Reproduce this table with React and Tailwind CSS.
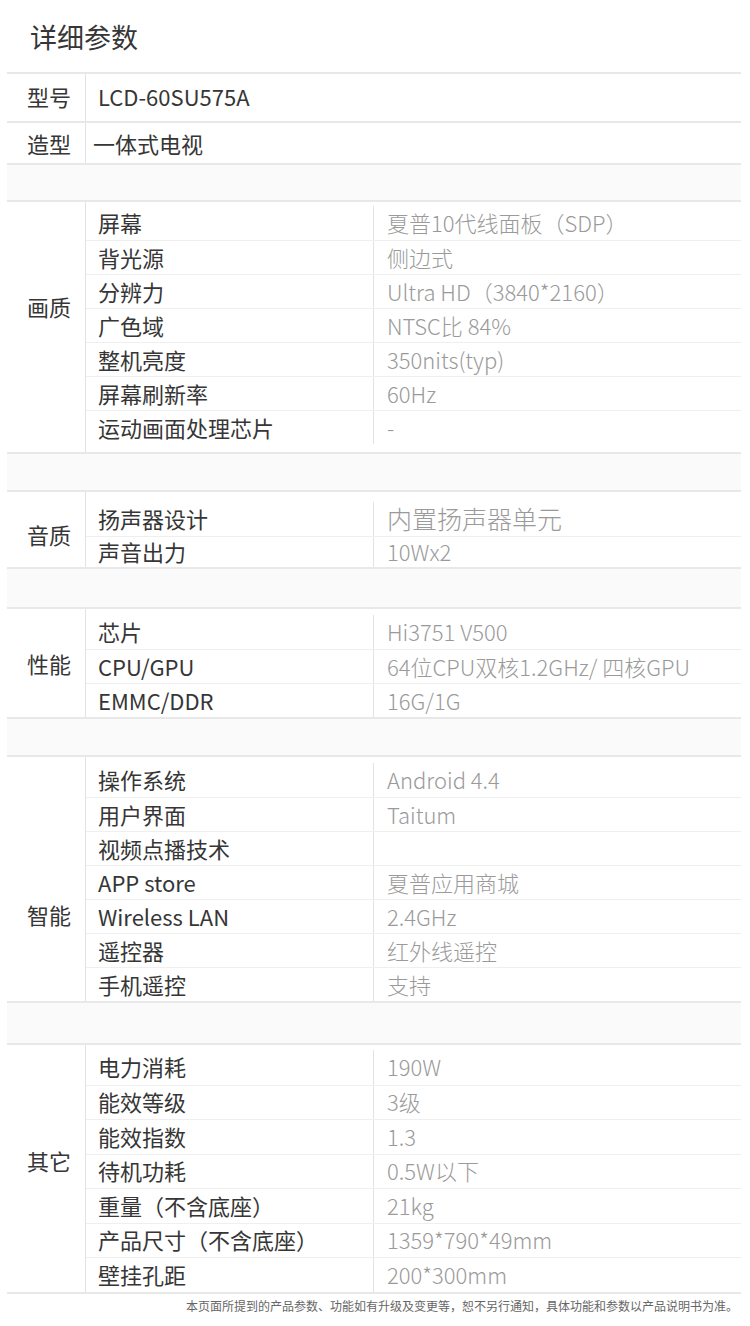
import React from "react";

const groups = [
  {
    label: "画质",
    pad: "pt-[4px] pb-[8px]",
    labelPad: "pb-[42px]",
    rowH: "h-[34px]",
    lastH: "h-[34px]",
    spacer: "h-[38px]",
    rows: [
      ["屏幕", "夏普10代线面板（SDP）"],
      ["背光源", "侧边式"],
      ["分辨力", "Ultra HD（3840*2160）"],
      ["广色域", "NTSC比 84%"],
      ["整机亮度", "350nits(typ)"],
      ["屏幕刷新率", "60Hz"],
      ["运动画面处理芯片", "-"],
    ],
  },
  {
    label: "音质",
    pad: "pt-[10px] pb-[0px]",
    labelPad: "pt-[10px]",
    rowH: "h-[34px]",
    lastH: "h-[31px]",
    spacer: "h-[40px]",
    rows: [
      ["扬声器设计", "内置扬声器单元", "text-[25px]"],
      ["声音出力", "10Wx2"],
    ],
  },
  {
    label: "性能",
    pad: "pt-[6px] pb-[0px]",
    labelPad: "pt-[0px]",
    rowH: "h-[34px]",
    lastH: "h-[34px]",
    spacer: "h-[38px]",
    rows: [
      ["芯片", "Hi3751 V500"],
      ["CPU/GPU", "64位CPU双核1.2GHz/ 四核GPU"],
      ["EMMC/DDR", "16G/1G"],
    ],
  },
  {
    label: "智能",
    pad: "pt-[6px] pb-[0px]",
    labelPad: "pt-[70px]",
    rowH: "h-[34px]",
    lastH: "h-[34px]",
    spacer: "h-[42px]",
    rows: [
      ["操作系统", "Android 4.4"],
      ["用户界面", "Taitum"],
      ["视频点播技术", ""],
      ["APP store", "夏普应用商城"],
      ["Wireless LAN", "2.4GHz"],
      ["遥控器", "红外线遥控"],
      ["手机遥控", "支持"],
    ],
  },
  {
    label: "其它",
    pad: "pt-[5px] pb-[0px]",
    labelPad: "pb-[16px]",
    rowH: "h-[34.5px]",
    lastH: "h-[34.5px]",
    spacer: null,
    rows: [
      ["电力消耗", "190W"],
      ["能效等级", "3级"],
      ["能效指数", "1.3"],
      ["待机功耗", "0.5W以下"],
      ["重量（不含底座）", "21kg"],
      ["产品尺寸（不含底座）", "1359*790*49mm"],
      ["壁挂孔距", "200*300mm"],
    ],
  },
];

const font = { fontFamily: '"Noto Sans CJK SC", "Noto Sans", sans-serif' };

function Group({ g }) {
  return (
    <>
      <div className="flex border-b-2 border-[#e8e8e8]">
        <div
          className={`w-[79px] shrink-0 flex items-center justify-center pl-[6px] border-r border-[#e3e3e3] text-[22px] text-[#363636] ${g.labelPad}`}
        >
          {g.label}
        </div>
        <div className={`flex-1 flex flex-col ${g.pad}`}>
          {g.rows.map((r, i) => (
            <div
              key={i}
              className={`flex ${i === g.rows.length - 1 ? g.lastH : g.rowH} ${
                i > 0 ? "border-t border-[#efefef]" : ""
              }`}
            >
              <div className="w-[287px] shrink-0 flex items-center pl-[12px] pb-[2px] text-[22px] text-[#363636] leading-none whitespace-nowrap">
                {r[0]}
              </div>
              <div
                className={`flex-1 flex items-center pl-[13px] pb-[2px] border-l border-[#e3e3e3] font-light text-[#9a9a9a] leading-none whitespace-nowrap ${
                  r[2] ? r[2] : "text-[22px]"
                }`}
              >
                {r[1]}
              </div>
            </div>
          ))}
        </div>
      </div>
      {g.spacer && (
        <div className={`${g.spacer} bg-[#fafafa] border-b-2 border-[#e8e8e8]`} />
      )}
    </>
  );
}

export default function App() {
  return (
    <div className="w-[750px] h-[1326px] bg-white overflow-hidden" style={font}>
      <div className="h-[72px] flex items-center pl-[30px] pt-[2px] text-[27px] text-[#363636]">
        详细参数
      </div>
      <div className="ml-[7px] w-[734px] border-t-2 border-[#e8e8e8]">
        <div className="flex h-[49px] border-b-2 border-[#e8e8e8]">
          <div className="w-[79px] shrink-0 flex items-center justify-center pl-[6px] pb-[3px] border-r border-[#e3e3e3] text-[22px] text-[#363636]">
            型号
          </div>
          <div className="flex-1 flex items-center pl-[12px] pb-[3px] text-[22px] text-[#363636]">
            LCD-60SU575A
          </div>
        </div>
        <div className="flex h-[42px] border-b-2 border-[#e8e8e8]">
          <div className="w-[79px] shrink-0 flex items-center justify-center pl-[6px] border-r border-[#e3e3e3] text-[22px] text-[#363636]">
            造型
          </div>
          <div className="flex-1 flex items-center pl-[7px] text-[22px] text-[#363636]">
            一体式电视
          </div>
        </div>
        <div className="h-[37px] bg-[#fafafa] border-b-2 border-[#e8e8e8]" />
        {groups.map((g, i) => (
          <Group key={i} g={g} />
        ))}
      </div>
      <div className="h-[34px] flex justify-end pr-[12px] pt-[4px] text-[12px] leading-[16px] text-[#666]">
        本页面所提到的产品参数、功能如有升级及变更等，恕不另行通知，具体功能和参数以产品说明书为准。
      </div>
    </div>
  );
}
